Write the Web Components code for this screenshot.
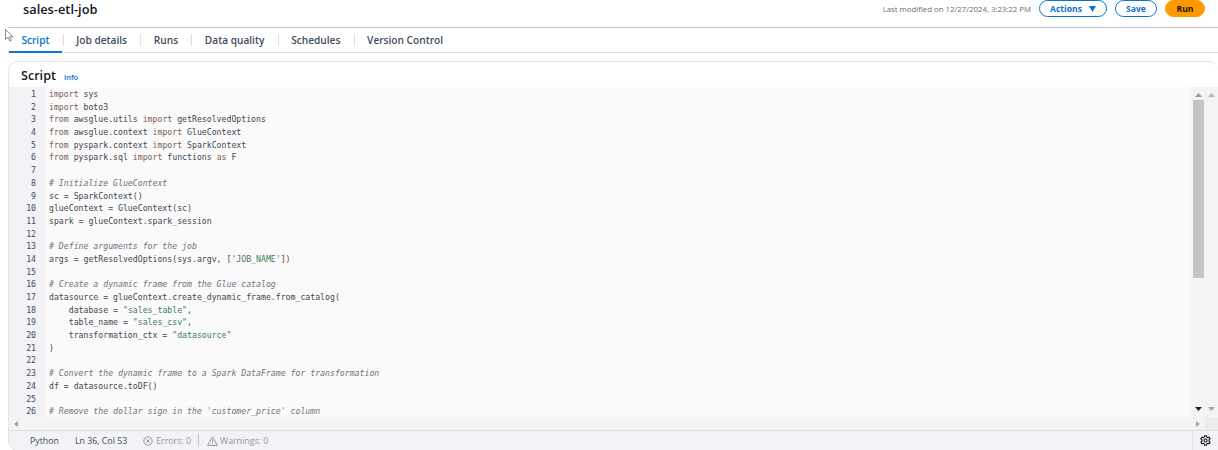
<!DOCTYPE html>
<html>
<head>
<meta charset="utf-8">
<style>
  html, body { margin: 0; background: #fff; }
  body { width: 1218px; height: 450px; overflow: hidden; font-family: "Open Sans", "Noto Sans", sans-serif; }
</style>
</head>
<body>
<job-page></job-page>
<script>
const LINES = [
  "<k>import</k> sys",
  "<k>import</k> boto3",
  "<k>from</k> awsglue.utils <k>import</k> getResolvedOptions",
  "<k>from</k> awsglue.context <k>import</k> GlueContext",
  "<k>from</k> pyspark.context <k>import</k> SparkContext",
  "<k>from</k> pyspark.sql <k>import</k> functions <k>as</k> F",
  "",
  "<c># Initialize GlueContext</c>",
  "sc = SparkContext()",
  "glueContext = GlueContext(sc)",
  "spark = glueContext.spark_session",
  "",
  "<c># Define arguments for the job</c>",
  "args = getResolvedOptions(sys.argv, [<s>'JOB_NAME'</s>])",
  "",
  "<c># Create a dynamic frame from the Glue catalog</c>",
  "datasource = glueContext.create_dynamic_frame.from_catalog(",
  "    database = <s>\"sales_table\"</s>,",
  "    table_name = <s>\"sales_csv\"</s>,",
  "    transformation_ctx = <s>\"datasource\"</s>",
  ")",
  "",
  "<c># Convert the dynamic frame to a Spark DataFrame for transformation</c>",
  "df = datasource.toDF()",
  "",
  "<c># Remove the dollar sign in the 'customer_price' column</c>"
];

class PageHeader extends HTMLElement {
  constructor() {
    super();
    this.attachShadow({ mode: "open" }).innerHTML = `
      <style>
        :host { display: flex; align-items: center; justify-content: space-between; height: 27px; margin-left: 8px; border-bottom: 1px solid #c6c6cd; box-sizing: content-box; }
        h1 { margin: 0 0 0 15px; font-size: 12.8px; font-weight: 600; color: #16191f; position: relative; top: -5px; }
        .right { display: flex; align-items: center; gap: 8px; margin-right: 13px; position: relative; top: -5px; }
        .modified { font-size: 7.8px; color: #5f6b7a; margin-right: 0; }
        .btn { box-sizing: border-box; height: 17px; border-radius: 9px; border: 1px solid #0972d3; color: #0972d3; font-size: 8.6px; font-weight: 700; display: flex; align-items: center; justify-content: center; gap: 7px; }
        .actions { width: 68px; }
        .save { width: 42px; }
        .run { width: 40px; background: #ff9900; border-color: #ff9900; color: #16191f; }
        svg { display: block; }
      </style>
      <h1><slot></slot></h1>
      <div class="right">
        <span class="modified">Last modified on 12/27/2024, 3:23:22 PM</span>
        <span class="btn actions">Actions <svg width="7" height="6" viewBox="0 0 7 6"><path d="M0 0h7L3.5 6z" fill="#0972d3"/></svg></span>
        <span class="btn save">Save</span>
        <span class="btn run">Run</span>
      </div>`;
  }
}

class TabBar extends HTMLElement {
  constructor() {
    super();
    this.attachShadow({ mode: "open" }).innerHTML = `
      <style>
        :host { display: flex; height: 24px; margin-left: 8px; border-bottom: 1px solid #dedee3; font-size: 10.15px; font-weight: 600; color: #414d5c; }
        .tab { display: flex; align-items: center; position: relative; padding: 0 13.4px; }
        .tab + .tab::before { content: ""; position: absolute; left: 0; top: 6px; height: 12px; width: 1px; background: #dedee3; }
        .on { color: #0972d3; }
        .on::after { content: ""; position: absolute; left: 1px; right: 1px; bottom: -1px; height: 2px; background: #0972d3; }
        .tab:first-child { padding-left: 13px; padding-right: 13px; }
      </style>
      <span class="tab on">Script</span>
      <span class="tab">Job details</span>
      <span class="tab">Runs</span>
      <span class="tab">Data quality</span>
      <span class="tab">Schedules</span>
      <span class="tab">Version Control</span>`;
  }
}

class CodeView extends HTMLElement {
  constructor() {
    super();
    const rows = LINES.map((l, i) => {
      const html = l.replace(/<k>/g, '<span class="k">').replace(/<\/k>/g, "</span>")
        .replace(/<c>/g, '<span class="c">').replace(/<\/c>/g, "</span>")
        .replace(/<s>/g, '<span class="s">').replace(/<\/s>/g, "</span>");
      return `<div class="row"><span class="num">${i + 1}</span><span class="txt">${html}</span></div>`;
    }).join("");
    this.attachShadow({ mode: "open" }).innerHTML = `
      <style>
        :host { display: block; flex: 1; min-height: 0; position: relative; background: #fafafa; overflow: hidden; }
        .lines { position: relative; padding-top: 1px; }
        .row { display: flex; height: 12.7px; line-height: 12.7px; font-family: "DejaVu Sans Mono", monospace; font-size: 8.2px; color: #3f4650; white-space: pre; }
        .num { width: 27px; flex: none; text-align: right; color: #414d5c; }
        .txt { padding-left: 13px; }
        .k { color: #7a5f55; }
        .c { color: #6b7480; font-style: italic; }
        .s { color: #3f7d62; }
        .gutter { position: absolute; left: 0; top: 0; bottom: 0; width: 37px; background: #f2f2f7; }
        .hbar { position: absolute; left: 0; right: 0; bottom: 0; height: 13px; background: #f4f4f6; }
        .hbar svg { position: absolute; top: 4px; }
        .corner { position: absolute; right: 0; top: 0; bottom: 0; width: 13px; background: #ececee; }
        .vbar { position: absolute; top: 0; right: 0; width: 27px; bottom: 0; background: #f4f4f6; }
        .thumb { position: absolute; right: 14px; top: 13px; width: 11px; height: 178px; background: #c4c4c4; }
        .up, .down { position: absolute; right: 16px; }
        .up { top: 6px; }
        .down { bottom: 19px; }
        .up2, .down2 { position: absolute; right: 3px; }
        .up2 { top: 6px; }
        .down2 { bottom: 19px; }
      </style>
      <div class="gutter"></div>
      <div class="lines">${rows}</div>
      <div class="vbar">
        <svg class="up" width="7" height="4" viewBox="0 0 7 4"><path d="M0 4h7L3.5 0z" fill="#9a9a9a"/></svg>
        <svg class="up2" width="7" height="4" viewBox="0 0 7 4"><path d="M0 4h7L3.5 0z" fill="#b5b5b5"/></svg>
        <div class="thumb"></div>
        <svg class="down" width="7" height="4" viewBox="0 0 7 4"><path d="M0 0h7L3.5 4z" fill="#222"/></svg>
        <svg class="down2" width="7" height="4" viewBox="0 0 7 4"><path d="M0 0h7L3.5 4z" fill="#a5a5a5"/></svg>
      </div>
      <div class="hbar">
        <svg style="left:5px" width="4" height="6" viewBox="0 0 4 6"><path d="M4 0v6L0 3z" fill="#a5a5a5"/></svg>
        <svg style="right:18px" width="4" height="6" viewBox="0 0 4 6"><path d="M0 0v6l4-3z" fill="#a5a5a5"/></svg>
        <div class="corner"></div>
      </div>`;
  }
}

class StatusBar extends HTMLElement {
  constructor() {
    super();
    this.attachShadow({ mode: "open" }).innerHTML = `
      <style>
        :host { display: flex; align-items: center; height: 19px; background: #f2f2f7; border-top: 1px solid #dedee3; font-size: 8.8px; color: #414d5c; padding-left: 21px; position: relative; }
        .lang { margin-right: 16px; font-weight: 500; }
        .pos { margin-right: 16px; font-weight: 500; }
        .muted { color: #8d99a8; display: flex; align-items: center; gap: 3px; }
        .warn { gap: 2px; }
        .sep { width: 1px; height: 13px; background: #c6c6cd; margin: 0 8px 0 7px; }
        .gear { position: absolute; right: 0; top: 0; bottom: 0; width: 25px; border-left: 1px solid #dedee3; display: flex; align-items: center; justify-content: center; }
        svg { display: block; }
      </style>
      <span class="lang">Python</span>
      <span class="pos">Ln 36, Col 53</span>
      <span class="muted"><svg width="10" height="10" viewBox="0 0 10 10" fill="none" stroke="#8d99a8"><circle cx="5" cy="5" r="4.2"/><path d="M3.3 3.3l3.4 3.4M6.7 3.3L3.3 6.7"/></svg>Errors: 0</span>
      <span class="sep"></span>
      <span class="muted warn"><svg width="11" height="10" viewBox="0 0 11 10" fill="none" stroke="#8d99a8"><path d="M5.5 .8L10.4 9.4H.6z"/><path d="M5.5 3.6v3M5.5 7.4v1"/></svg>Warnings: 0</span>
      <span class="gear"><svg width="11" height="11" viewBox="0 0 16 16" fill="none" stroke="#16191f" stroke-width="1.6"><circle cx="8" cy="8" r="2.2"/><path d="M6.6 1h2.8l.4 2 1.5.9 2-.7 1.4 2.4-1.6 1.4v1.9l1.6 1.3-1.4 2.5-2-.7-1.5.9-.4 2H6.6l-.4-2-1.5-.9-2 .7-1.4-2.5 1.6-1.3V7L1.3 5.6l1.4-2.4 2 .7 1.5-.9z"/></svg></span>`;
  }
}

class ScriptPanel extends HTMLElement {
  constructor() {
    super();
    this.attachShadow({ mode: "open" }).innerHTML = `
      <style>
        :host { display: flex; flex-direction: column; margin: 8px 0 0 8px; height: 390px; border: 1px solid #e3e3e8; border-right: none; border-radius: 10px 10px 0 10px; background: #fff; overflow: hidden; box-sizing: border-box; }
        .head { height: 25px; box-sizing: border-box; padding-top: 2px; flex: none; display: flex; align-items: center; gap: 8px; padding-left: 12px; }
        h2 { margin: 0; font-size: 12.6px; font-weight: 600; color: #16191f; }
        a { font-size: 7.4px; font-weight: 600; color: #0972d3; position: relative; top: 1px; }
      </style>
      <div class="head"><h2>Script</h2><a>Info</a></div>
      <code-view></code-view>
      <status-bar></status-bar>`;
  }
}

class JobPage extends HTMLElement {
  constructor() {
    super();
    this.attachShadow({ mode: "open" }).innerHTML = `
      <style>
        :host { display: block; width: 1218px; height: 450px; position: relative; }
        svg { position: absolute; left: 5px; top: 29px; }
      </style>
      <page-header>sales-etl-job</page-header>
      <tab-bar></tab-bar>
      <script-panel></script-panel>
      <svg width="9" height="13" viewBox="0 0 9 13"><path d="M.5.5v10l2.6-2.3 1.7 3.8 1.5-.7-1.7-3.6h3.4z" fill="#fff" stroke="#6b6b6b" stroke-width=".8"/></svg>`;
  }
}

customElements.define("page-header", PageHeader);
customElements.define("tab-bar", TabBar);
customElements.define("code-view", CodeView);
customElements.define("status-bar", StatusBar);
customElements.define("script-panel", ScriptPanel);
customElements.define("job-page", JobPage);
</script>
</body>
</html>
